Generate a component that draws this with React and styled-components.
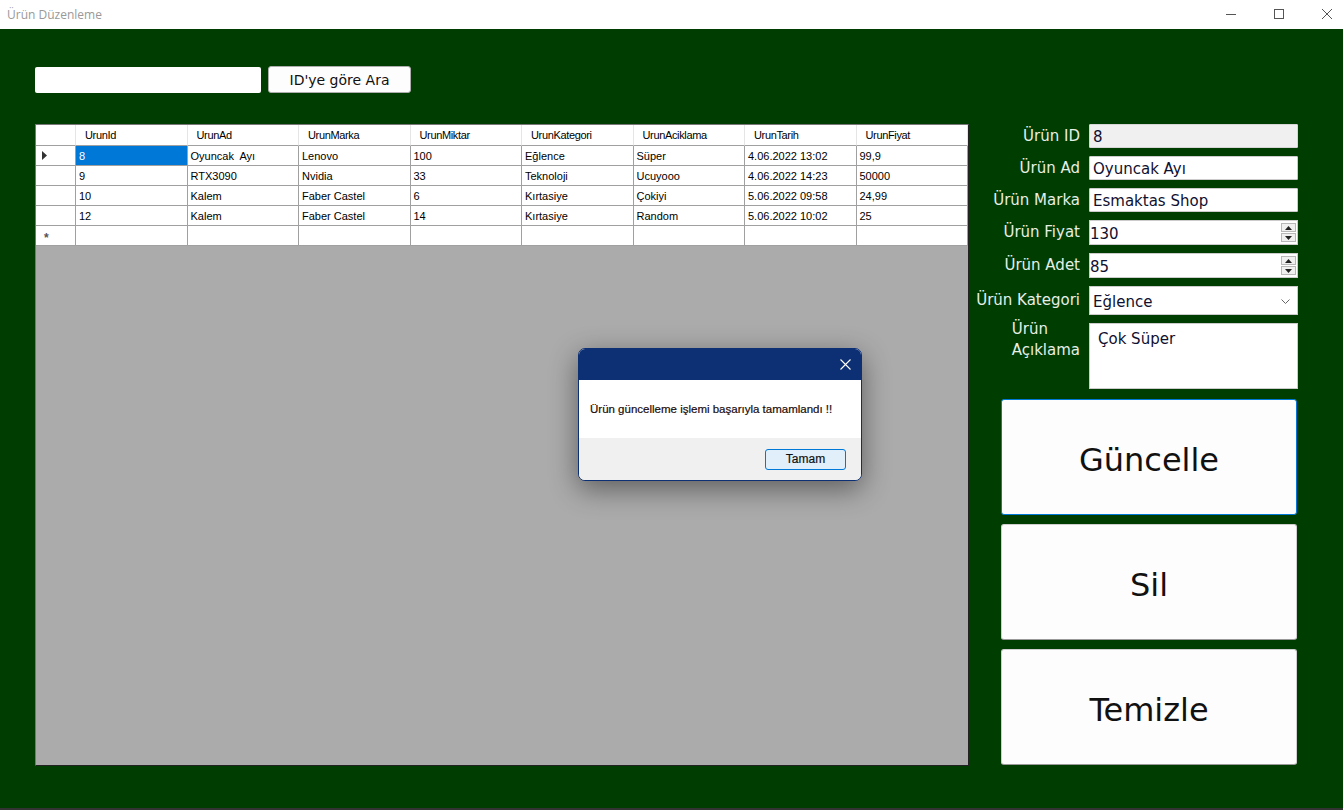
import React from "react"
import styled, { createGlobalStyle } from "styled-components"

const GlobalStyle = createGlobalStyle`
  html, body {
    margin: 0;
    padding: 0;
    background: #003d00;
  }
  * { box-sizing: border-box; }
`

const columns = ["UrunId", "UrunAd", "UrunMarka", "UrunMiktar", "UrunKategori", "UrunAciklama", "UrunTarih", "UrunFiyat"]

const rows = [
  ["8", "Oyuncak  Ayı", "Lenovo", "100", "Eğlence", "Süper", "4.06.2022 13:02", "99,9"],
  ["9", "RTX3090", "Nvidia", "33", "Teknoloji", "Ucuyooo", "4.06.2022 14:23", "50000"],
  ["10", "Kalem", "Faber Castel", "6", "Kırtasiye", "Çokiyi", "5.06.2022 09:58", "24,99"],
  ["12", "Kalem", "Faber Castel", "14", "Kırtasiye", "Random", "5.06.2022 10:02", "25"],
]

function SpinArrows() {
  return (
    <Spinner>
      <SpinButton>
        <svg width="7" height="4" viewBox="0 0 7 4"><path d="M0 4L3.5 0L7 4Z" fill="#222" /></svg>
      </SpinButton>
      <SpinButton>
        <svg width="7" height="4" viewBox="0 0 7 4"><path d="M0 0L3.5 4L7 0Z" fill="#222" /></svg>
      </SpinButton>
    </Spinner>
  )
}

export default function App() {
  return (
    <>
      <GlobalStyle />
      <Window>
        <TitleBar>
          <Title>Ürün Düzenleme</Title>
          <WindowControls>
            <ControlButton>
              <svg width="10" height="10" viewBox="0 0 10 10"><path d="M0 5.5h10" stroke="#555" strokeWidth="1" /></svg>
            </ControlButton>
            <ControlButton>
              <svg width="10" height="10" viewBox="0 0 10 10"><rect x="0.5" y="0.5" width="9" height="9" fill="none" stroke="#555" strokeWidth="1" /></svg>
            </ControlButton>
            <ControlButton>
              <svg width="10" height="10" viewBox="0 0 10 10"><path d="M0 0L10 10M10 0L0 10" stroke="#555" strokeWidth="1" /></svg>
            </ControlButton>
          </WindowControls>
        </TitleBar>

        <Body>
          <SearchRow>
            <SearchInput />
            <SearchButton>ID'ye göre Ara</SearchButton>
          </SearchRow>

          <ContentRow>
            <DataGrid>
              <GridRows>
                <HeaderCorner />
                {columns.map((c) => (
                  <HeaderCell key={c}>{c}</HeaderCell>
                ))}
                {rows.map((r, i) => (
                  <React.Fragment key={i}>
                    <RowHeader>
                      {i === 0 && (
                        <svg width="6" height="9" viewBox="0 0 6 9"><path d="M0 0L5 4.5L0 9Z" fill="#333" /></svg>
                      )}
                    </RowHeader>
                    {r.map((v, j) => (
                      <Cell key={j} $selected={i === 0 && j === 0}>{v}</Cell>
                    ))}
                  </React.Fragment>
                ))}
                <RowHeader>
                  <NewRowMark>*</NewRowMark>
                </RowHeader>
                {columns.map((c) => (
                  <Cell key={c} />
                ))}
              </GridRows>
            </DataGrid>

            <SidePanel>
              <Form>
                <Label>Ürün ID</Label>
                <TextBox $readOnly>8</TextBox>
                <Label>Ürün Ad</Label>
                <TextBox>Oyuncak Ayı</TextBox>
                <Label>Ürün Marka</Label>
                <TextBox>Esmaktas Shop</TextBox>
                <Label>Ürün Fiyat</Label>
                <NumberBox>
                  <span>130</span>
                  <SpinArrows />
                </NumberBox>
                <Label>Ürün Adet</Label>
                <NumberBox>
                  <span>85</span>
                  <SpinArrows />
                </NumberBox>
                <Label>Ürün Kategori</Label>
                <ComboBox>
                  <span>Eğlence</span>
                  <svg width="9" height="5" viewBox="0 0 9 5"><path d="M0.5 0.5L4.5 4.5L8.5 0.5" fill="none" stroke="#666" strokeWidth="1" /></svg>
                </ComboBox>
                <MultiLabel>Ürün<br />Açıklama</MultiLabel>
                <TextArea>Çok Süper</TextArea>
              </Form>

              <Actions>
                <ActionButton $focused>Güncelle</ActionButton>
                <ActionButton>Sil</ActionButton>
                <ActionButton>Temizle</ActionButton>
              </Actions>
            </SidePanel>
          </ContentRow>

          <Dialog>
            <DialogTitle>
              <svg width="11" height="11" viewBox="0 0 11 11"><path d="M0.5 0.5L10.5 10.5M10.5 0.5L0.5 10.5" stroke="#fff" strokeWidth="1.1" /></svg>
            </DialogTitle>
            <DialogMessage>Ürün güncelleme işlemi başarıyla tamamlandı !!</DialogMessage>
            <DialogFooter>
              <OkButton>Tamam</OkButton>
            </DialogFooter>
          </Dialog>
        </Body>
      </Window>
    </>
  )
}

const Window = styled.div`
  width: 1343px;
  height: 810px;
  display: flex;
  flex-direction: column;
  background: #003d00;
  border-bottom: 2px solid #333;
  overflow: hidden;
`
const TitleBar = styled.div`
  height: 29px;
  flex: none;
  background: #fff;
  display: flex;
  align-items: center;
  justify-content: space-between;
  padding-left: 7px;
`
const Title = styled.div`
  font-family: "Open Sans", "Liberation Sans", sans-serif;
  font-size: 12px;
  color: #999;
`
const WindowControls = styled.div`
  display: flex;
  height: 100%;
  margin-right: -8px;
`
const ControlButton = styled.div`
  width: 48px;
  height: 100%;
  display: flex;
  align-items: center;
  justify-content: center;
  padding-bottom: 2px;
`
const Body = styled.div`
  position: relative;
  flex: 1;
  padding: 37px 0 0 35px;
  display: flex;
  flex-direction: column;
`
const SearchRow = styled.div`
  display: flex;
  align-items: center;
  gap: 7px;
  height: 27px;
`
const SearchInput = styled.div`
  width: 226px;
  height: 26px;
  margin-top: 1px;
  background: #fff;
  border-radius: 2px;
`
const SearchButton = styled.div`
  width: 143px;
  height: 27px;
  background: #fdfdfd;
  border: 1px solid #adadad;
  border-radius: 3px;
  display: flex;
  align-items: center;
  justify-content: center;
  font-family: "DejaVu Sans", sans-serif;
  font-size: 14px;
  color: #111;
`
const ContentRow = styled.div`
  display: flex;
  gap: 1px;
  margin-top: 31px;
`
const DataGrid = styled.div`
  width: 934px;
  height: 642px;
  background: #ababab;
  border: 1px solid #222;
  border-top-color: #777;
  border-left-color: #777;
`
const GridRows = styled.div`
  display: grid;
  grid-template-columns: 40px repeat(8, 1fr);
  grid-template-rows: 21px;
  grid-auto-rows: 20px;
  background: #fff;
  font-family: "Liberation Sans", Arial, sans-serif;
  font-size: 11px;
  color: #000;
`
const HeaderCorner = styled.div`
  border-right: 1px solid #e5e5e5;
  border-bottom: 1px solid #a0a0a0;
`
const HeaderCell = styled.div`
  border-right: 1px solid #e5e5e5;
  border-bottom: 1px solid #a0a0a0;
  padding-left: 9px;
  display: flex;
  align-items: center;
  letter-spacing: -0.35px;
`
const RowHeader = styled.div`
  border-right: 1px solid #a0a0a0;
  border-bottom: 1px solid #a0a0a0;
  display: flex;
  align-items: center;
  padding-left: 6px;
`
const NewRowMark = styled.span`
  font-size: 12px;
  font-weight: bold;
  color: #555;
  margin-left: 2px;
  margin-top: 5px;
`
const Cell = styled.div`
  border-right: 1px solid #a0a0a0;
  border-bottom: 1px solid #a0a0a0;
  padding-left: 3px;
  display: flex;
  align-items: center;
  white-space: pre;
  background: ${(p) => (p.$selected ? "#0078d7" : "#fff")};
  color: ${(p) => (p.$selected ? "#fff" : "#000")};
`
const SidePanel = styled.div`
  width: 328px;
  display: flex;
  flex-direction: column;
`
const Form = styled.div`
  display: grid;
  grid-template-columns: 110px 209px;
  grid-template-rows: 24px 24px 24px 25px 25px 29px 66px;
  column-gap: 9px;
  row-gap: 8px;
  font-family: "DejaVu Sans", sans-serif;
  font-size: 15px;
`
const Label = styled.div`
  color: #e6efe6;
  text-align: right;
  align-self: center;
  white-space: nowrap;
  margin-top: -1px;
`
const MultiLabel = styled.div`
  color: #e6efe6;
  justify-self: end;
  text-align: left;
  line-height: 21px;
  margin-top: -4px;
`
const TextBox = styled.div`
  background: ${(p) => (p.$readOnly ? "#f0f0f0" : "#fff")};
  border: 1px solid ${(p) => (p.$readOnly ? "#d6d6d6" : "#ccc")};
  border-radius: 1px;
  color: #101030;
  display: flex;
  align-items: center;
  padding: 2px 3px 0;
`
const NumberBox = styled.div`
  background: #fff;
  border: 1px solid #ccc;
  color: #101030;
  display: flex;
  align-items: center;
  justify-content: space-between;
  padding: 2px 1px 0 0;
`
const Spinner = styled.div`
  display: flex;
  flex-direction: column;
  gap: 1px;
  align-self: stretch;
  padding: 0 0 2px;
`
const SpinButton = styled.div`
  flex: 1;
  width: 15px;
  border: 1px solid #b8b8b8;
  background: #f0f0f0;
  display: flex;
  align-items: center;
  justify-content: center;
`
const ComboBox = styled.div`
  background: #fff;
  border: 1px solid #ccc;
  color: #101030;
  display: flex;
  align-items: center;
  justify-content: space-between;
  padding: 2px 7px 0 3px;
`
const TextArea = styled.div`
  background: #fff;
  border: 1px solid #ccc;
  color: #101030;
  padding: 6px 8px;
`
const Actions = styled.div`
  display: flex;
  flex-direction: column;
  gap: 9px;
  margin-top: 10px;
  margin-left: 31px;
  width: 296px;
`
const ActionButton = styled.div`
  height: 116px;
  background: #fdfdfd;
  border: 1px solid ${(p) => (p.$focused ? "#0078d7" : "#cfcfcf")};
  border-bottom-color: ${(p) => (p.$focused ? "#0078d7" : "#999")};
  border-radius: 3px;
  display: flex;
  align-items: center;
  justify-content: center;
  font-family: "DejaVu Sans", sans-serif;
  font-size: 32px;
  color: #111;
  padding-top: 6px;
`
const Dialog = styled.div`
  position: absolute;
  left: 578px;
  top: 319px;
  width: 284px;
  height: 133px;
  border: 1px solid #0d3075;
  border-radius: 7px;
  overflow: hidden;
  background: #fff;
  display: flex;
  flex-direction: column;
  box-shadow: 0 8px 28px rgba(0, 0, 0, 0.45);
  font-family: "Liberation Sans", Arial, sans-serif;
`
const DialogTitle = styled.div`
  height: 31px;
  background: #0d3075;
  display: flex;
  align-items: center;
  justify-content: flex-end;
  padding-right: 10px;
`
const DialogMessage = styled.div`
  height: 58px;
  display: flex;
  align-items: center;
  padding-left: 11px;
  font-size: 11.5px;
  color: #1a0a0a;
  -webkit-text-stroke: 0.2px #1a0a0a;
`
const DialogFooter = styled.div`
  flex: 1;
  background: #f0f0f0;
  display: flex;
  align-items: center;
  justify-content: flex-end;
  padding-right: 15px;
`
const OkButton = styled.div`
  width: 81px;
  height: 21px;
  border: 1px solid #0078d7;
  border-radius: 3px;
  background: #e1effa;
  display: flex;
  align-items: center;
  justify-content: center;
  font-size: 12px;
  color: #111;
  -webkit-text-stroke: 0.2px #111;
`
